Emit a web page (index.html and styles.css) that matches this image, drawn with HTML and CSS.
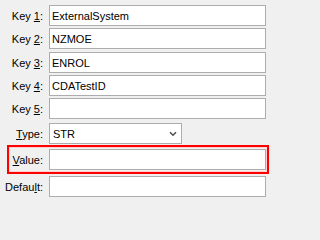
FILE: index.html
```html
<!DOCTYPE html>
<html>
<head>
<meta charset="utf-8">
<link rel="stylesheet" href="styles.css">
</head>
<body>
<div class="form">
  <div class="row r1"><label class="lbl">Key <u>1</u>:</label><input class="field" type="text" value="ExternalSystem"></div>
  <div class="row r2"><label class="lbl">Key <u>2</u>:</label><input class="field" type="text" value="NZMOE"></div>
  <div class="row r3"><label class="lbl">Key <u>3</u>:</label><input class="field" type="text" value="ENROL"></div>
  <div class="row r4"><label class="lbl">Key <u>4</u>:</label><input class="field" type="text" value="CDATestID"></div>
  <div class="row r5"><label class="lbl">Key <u>5</u>:</label><input class="field" type="text" value=""></div>
  <div class="row r6"><label class="lbl"><u>T</u>ype:</label>
    <div class="select"><span class="sel-text">STR</span>
      <svg class="chev" width="8" height="6" viewBox="0 0 8 6"><path d="M1 1.2 L4 4.2 L7 1.2" fill="none" stroke="#505050" stroke-width="1.6"/></svg>
    </div>
  </div>
  <div class="row highlight"><label class="lbl"><u>V</u>alue:</label><input class="field" type="text" value=""></div>
  <div class="row r8"><label class="lbl">Defau<u>l</u>t:</label><input class="field" type="text" value=""></div>
</div>
</body>
</html>
```
FILE: styles.css
```css
html, body {
  margin: 0;
  padding: 0;
  background: #f0f0f0;
  width: 271px;
  height: 202px;
  overflow: hidden;
}
.form {
  display: flex;
  flex-direction: column;
  padding: 5px 5px 0 0;
  font-family: "Liberation Sans", Arial, sans-serif;
  font-size: 11px;
  color: #000;
}
.row {
  display: flex;
  align-items: center;
  height: 21px;
  flex: none;
}
.r2 { margin-top: 2px; }
.r3 { margin-top: 3px; }
.r4 { margin-top: 2px; }
.r5 { margin-top: 2px; }
.r6 { margin-top: 4px; }
.r8 { margin-top: 2px; }
.lbl {
  width: 43px;
  flex: none;
  text-align: right;
  margin-right: 6px;
  white-space: nowrap;
}
.lbl u {
  text-underline-offset: 1px;
}
.field {
  flex: 1;
  min-width: 0;
  height: 21px;
  box-sizing: border-box;
  margin: 0;
  border: 1px solid #adadad;
  background: #fff;
  padding: 0 2px;
  font-family: "Liberation Sans", Arial, sans-serif;
  font-size: 11px;
  color: #000;
  outline: none;
}
.select {
  width: 133px;
  height: 21px;
  box-sizing: border-box;
  border: 1px solid #adadad;
  background: #fff;
  display: flex;
  align-items: center;
  justify-content: space-between;
  padding: 0 4px 0 3px;
}
.chev {
  display: block;
}
.highlight {
  height: auto;
  margin: 1px -3px 0 7px;
  border: 2px solid #ff0000;
  box-shadow: inset 0 0 0 1px #ffd0d0;
  padding: 2px 1px 2px 0;
}
.highlight .lbl {
  width: 34px;
}
```
